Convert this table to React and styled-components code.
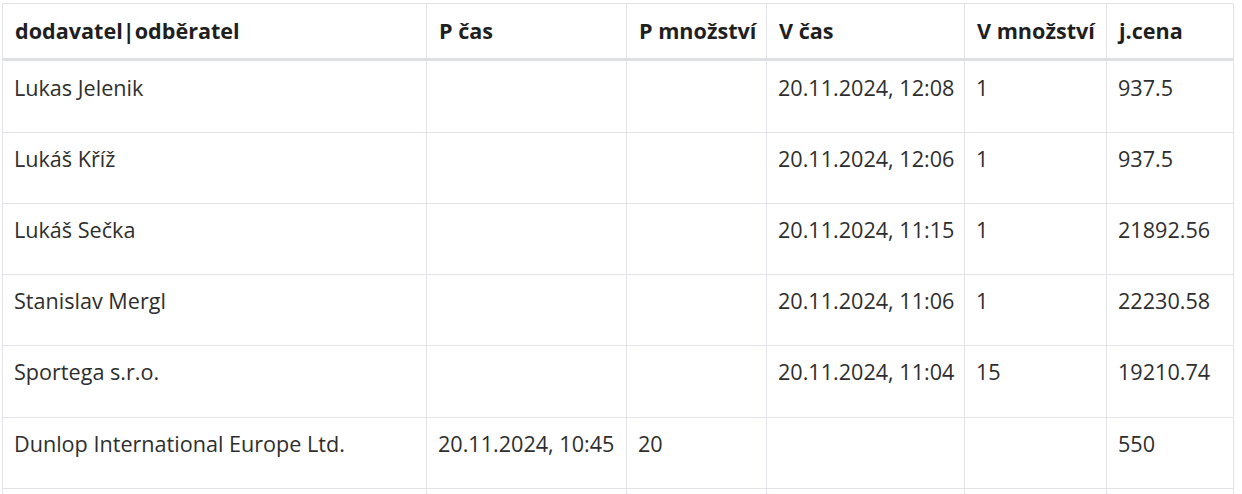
import React from "react";
import styled, { createGlobalStyle } from "styled-components";

const GlobalStyle = createGlobalStyle`
  html, body {
    margin: 0;
    padding: 0;
    background: #fff;
  }
  body {
    font-family: "Open Sans", "Liberation Sans", sans-serif;
    color: #2b2b2b;
  }
`;

const Wrapper = styled.div`
  padding: 3px 0 0 2px;
  width: 1231px;
`;

const Table = styled.table`
  width: 100%;
  table-layout: fixed;
  border-collapse: collapse;
  font-size: 21.6px;
  line-height: 32px;
`;

const HeadCell = styled.th`
  height: 54px;
  padding: 0 12px;
  text-align: left;
  font-weight: 700;
  color: #1f1f1f;
  white-space: nowrap;
  border: 1px solid #e2e3e8;
  border-bottom: 3px solid #dfe0e5;
  vertical-align: middle;
`;

const Cell = styled.td`
  height: ${(p) => (p.$first ? "72.5px" : "71.33px")};
  box-sizing: border-box;
  padding: ${(p) => (p.$first ? "11px" : "10px")} 12px 0 11px;
  vertical-align: top;
  white-space: nowrap;
  color: #2e2e2e;
  border: 1px solid #e2e3e8;
`;

const columns = [
  { label: "dodavatel|odběratel", width: 424 },
  { label: "P čas", width: 200 },
  { label: "P množství", width: 140 },
  { label: "V čas", width: 198 },
  { label: "V množství", width: 142 },
  { label: "j.cena", width: 127 },
];

const rows = [
  ["Lukas Jelenik", "", "", "20.11.2024, 12:08", "1", "937.5"],
  ["Lukáš Kříž", "", "", "20.11.2024, 12:06", "1", "937.5"],
  ["Lukáš Sečka", "", "", "20.11.2024, 11:15", "1", "21892.56"],
  ["Stanislav Mergl", "", "", "20.11.2024, 11:06", "1", "22230.58"],
  ["Sportega s.r.o.", "", "", "20.11.2024, 11:04", "15", "19210.74"],
  ["Dunlop International Europe Ltd.", "20.11.2024, 10:45", "20", "", "", "550"],
  ["", "", "", "", "", ""],
];

const App = () => (
  <Wrapper>
    <GlobalStyle />
    <Table>
      <colgroup>
        {columns.map((c) => (
          <col key={c.label} style={{ width: c.width }} />
        ))}
      </colgroup>
      <thead>
        <tr>
          {columns.map((c) => (
            <HeadCell key={c.label}>{c.label}</HeadCell>
          ))}
        </tr>
      </thead>
      <tbody>
        {rows.map((r, i) => (
          <tr key={i}>
            {r.map((v, j) => (
              <Cell key={j} $first={i === 0}>
                {v}
              </Cell>
            ))}
          </tr>
        ))}
      </tbody>
    </Table>
  </Wrapper>
);

export default App;
